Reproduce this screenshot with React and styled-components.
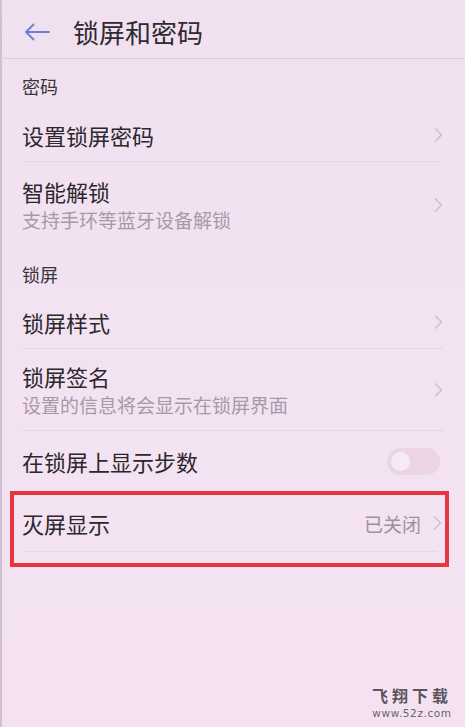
import styled, { createGlobalStyle } from "styled-components";

const GlobalStyle = createGlobalStyle`
  html, body {
    margin: 0;
    padding: 0;
    background: #f3e3f2;
  }
  body {
    font-family: "Noto Sans CJK SC", "Noto Sans", sans-serif;
  }
`;

const Page = styled.div`
  width: 465px;
  min-height: 727px;
  display: flex;
  flex-direction: column;
  background: linear-gradient(180deg, #f0e0f0 0%, #f3e3f2 40%, #f4e2f2 100%);
  box-shadow: inset 2px 0 0 #cfc2cf;
  box-sizing: border-box;
  overflow: hidden;
`;

const Header = styled.header`
  height: 59px;
  display: flex;
  align-items: center;
  padding: 6px 0 0 24px;
  box-sizing: border-box;
  border-bottom: 1px solid #dccdda;
`;

const BackButton = styled.span`
  width: 26px;
  height: 20px;
  display: flex;
  align-items: center;
  margin-right: 23px;
`;

const Title = styled.h1`
  margin: 0;
  font-size: 26px;
  font-weight: 400;
  color: #2e2a2e;
  line-height: 1;
`;

const SectionLabel = styled.div`
  height: 48px;
  display: flex;
  align-items: center;
  padding: 6px 0 0 22px;
  box-sizing: border-box;
  font-size: 18px;
  color: #3a353a;
`;

const Row = styled.div`
  height: ${({ $h }) => $h}px;
  display: flex;
  align-items: center;
  padding: 0 ${({ $pr }) => $pr ?? 22}px 0 ${({ $pl }) => $pl ?? 22}px;
  box-sizing: border-box;
  position: relative;

  &::after {
    content: "";
    display: ${({ $divider }) => ($divider ? "block" : "none")};
    position: absolute;
    left: 22px;
    right: 22px;
    bottom: 0;
    height: 1px;
    background: #e6d5e4;
  }
`;

const Texts = styled.div`
  flex: 1;
  display: flex;
  flex-direction: column;
`;

const ItemTitle = styled.div`
  font-size: 22px;
  line-height: 30px;
  color: #2b272b;
`;

const ItemSub = styled.div`
  font-size: 19px;
  line-height: 28px;
  color: #a999a7;
`;

const Value = styled.span`
  font-size: 19px;
  color: #9d929c;
  margin-right: 11px;
`;

const Toggle = styled.span`
  width: 53px;
  height: 27px;
  border-radius: 14px;
  background: #ead4e6;
  display: flex;
  align-items: center;
  padding-left: 4px;
  box-sizing: border-box;

  &::before {
    content: "";
    width: 19px;
    height: 19px;
    border-radius: 50%;
    background: #f6eaf5;
  }
`;

const Highlight = styled.div`
  margin: 0 16px 0 10px;
  height: 76px;
  border: 4px solid #e8363e;
  box-sizing: border-box;
`;

const InnerDivider = styled.div`
  height: 1px;
  margin: 0 8px;
  background: #e8d8e6;
`;

const Watermark = styled.div`
  margin-top: auto;
  align-self: flex-end;
  margin-right: 13px;
  margin-bottom: 8px;
  display: flex;
  flex-direction: column;
  align-items: center;
  gap: 2px;
  color: #5a555a;
`;

const MarkTitle = styled.div`
  font-size: 16px;
  font-weight: 700;
  letter-spacing: 4px;
  line-height: 20px;
`;

const MarkUrl = styled.div`
  font-family: "DejaVu Sans", sans-serif;
  font-size: 10.5px;
  letter-spacing: 0.6px;
  line-height: 12px;
  color: #6a656a;
`;

function Chevron() {
  return (
    <svg width="10" height="16" viewBox="0 0 10 16">
      <path d="M2 1.5 L8.5 8 L2 14.5" fill="none" stroke="#cbbfca" strokeWidth="1.4" />
    </svg>
  );
}

function BackArrow() {
  return (
    <svg width="26" height="18" viewBox="0 0 26 18">
      <path
        d="M25 9 H2 M9.5 1.5 L2 9 L9.5 16.5"
        fill="none"
        stroke="#6e7fcf"
        strokeWidth="1.8"
        strokeLinecap="round"
        strokeLinejoin="round"
      />
    </svg>
  );
}

export default function App() {
  return (
    <Page>
      <GlobalStyle />
      <Header>
        <BackButton>
          <BackArrow />
        </BackButton>
        <Title>锁屏和密码</Title>
      </Header>

      <SectionLabel>密码</SectionLabel>
      <Row $h={55} $divider>
        <Texts>
          <ItemTitle>设置锁屏密码</ItemTitle>
        </Texts>
        <Chevron />
      </Row>
      <Row $h={85}>
        <Texts>
          <ItemTitle>智能解锁</ItemTitle>
          <ItemSub>支持手环等蓝牙设备解锁</ItemSub>
        </Texts>
        <Chevron />
      </Row>

      <SectionLabel>锁屏</SectionLabel>
      <Row $h={54} $divider>
        <Texts>
          <ItemTitle>锁屏样式</ItemTitle>
        </Texts>
        <Chevron />
      </Row>
      <Row $h={82} $divider>
        <Texts>
          <ItemTitle>锁屏签名</ItemTitle>
          <ItemSub>设置的信息将会显示在锁屏界面</ItemSub>
        </Texts>
        <Chevron />
      </Row>
      <Row $h={60} $pr={25}>
        <Texts>
          <ItemTitle>在锁屏上显示步数</ItemTitle>
        </Texts>
        <Toggle />
      </Row>

      <Highlight>
        <Row $h={56} $pl={8} $pr={3}>
          <Texts>
            <ItemTitle>灭屏显示</ItemTitle>
          </Texts>
          <Value>已关闭</Value>
          <Chevron />
        </Row>
        <InnerDivider />
      </Highlight>

      <Watermark>
        <MarkTitle>飞翔下载</MarkTitle>
        <MarkUrl>www.52z.com</MarkUrl>
      </Watermark>
    </Page>
  );
}
